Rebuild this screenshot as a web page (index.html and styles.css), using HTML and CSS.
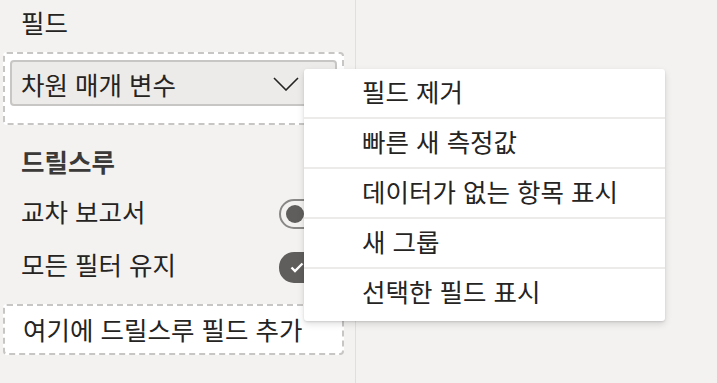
FILE: index.html
```html
<!DOCTYPE html>
<html lang="ko">
<head>
    <meta charset="UTF-8">
    <meta name="viewport" content="width=device-width, initial-scale=1.0">
    <title>필드 메뉴</title>
    <link rel="stylesheet" href="styles.css">
</head>
<body>

	<section class="pane">
		<!-- Fields well -->
		<div class="pane-title">필드</div>
		<div class="well">
			<div class="field-pill">
				<span>차원 매개 변수</span>
				<svg class="chevron" width="26" height="14" viewBox="0 0 26 14">
					<path d="M1 1 L13 13 L25 1" fill="none" stroke="#252423" stroke-width="1.6"/>
				</svg>
			</div>
		</div>

		<!-- Drill through -->
		<div class="pane-title bold">드릴스루</div>
		<div class="toggle-row">
			<span class="label">교차 보고서</span>
			<span class="toggle"><span class="knob"></span></span>
		</div>
		<div class="toggle-row second">
			<span class="label">모든 필터 유지</span>
			<span class="toggle on">
				<svg class="check" width="14" height="11" viewBox="0 0 14 11">
					<path d="M1.5 5.5 L5 9 L12.5 1.5" fill="none" stroke="#fff" stroke-width="2.4"/>
				</svg>
			</span>
		</div>
		<div class="well drop">여기에 드릴스루 필드 추가</div>
	</section>

	<!-- Context menu over the pane -->
	<ul class="menu">
		<li>필드 제거</li>
		<li>빠른 새 측정값</li>
		<li>데이터가 없는 항목 표시</li>
		<li>새 그룹</li>
		<li>선택한 필드 표시</li>
	</ul>

</body>
</html>
```

FILE: styles.css
```css
*{
    padding: 0;
    margin: 0;
    box-sizing: border-box;
}

body{
    background: #f3f2f1;
    color: #252423;
    font-family: "Noto Sans CJK KR", "Noto Sans", sans-serif;
    font-size: 25.5px;
    height: 100vh;
    overflow: hidden;
}

/* Left pane */
.pane{
    width: 356px;
    height: 100vh;
    border-right: 1px solid #e1dfdd;
    padding-top: 6px;
}

.pane-title{
    padding-left: 21px;
    line-height: 32px;
    height: 46px;
}
.pane-title.bold{
    font-weight: bold;
    color: #3b3a39;
    padding-top: 14px;
    line-height: 44px;
    height: 60px;
}

/* Dashed drop wells */
.well{
    margin-left: 3px;
    width: 341px;
    background: #fff;
    border: 2px dashed #c8c6c4;
    border-radius: 4px;
    padding: 6px 5px 17px 5px;
}

.field-pill{
    height: 46px;
    display: flex;
    align-items: center;
    justify-content: space-between;
    background: #edebe9;
    border: 2px solid #c8c6c4;
    border-radius: 4px;
    padding: 0 36px 0 9px;
}
.chevron{
    margin-top: 2px;
}

/* Toggle rows */
.toggle-row{
    display: flex;
    align-items: center;
    justify-content: space-between;
    height: 58px;
    padding: 0 16px 0 21px;
}
.toggle-row.second{
    height: 49px;
}
.label{
    padding-bottom: 8px;
}

.toggle{
    width: 60px;
    height: 30px;
    border: 2px solid #8a8886;
    border-radius: 15px;
    display: flex;
    align-items: center;
    padding-left: 5px;
}
.knob{
    width: 18px;
    height: 18px;
    border-radius: 50%;
    background: #605e5c;
}
.toggle.on{
    height: 31px;
    background: #605e5c;
    border-color: #605e5c;
    padding-left: 9px;
}

.well.drop{
    margin-top: 12px;
    height: 51px;
    padding: 0 0 3px 18px;
    display: flex;
    align-items: center;
}

/* Context menu */
.menu{
    position: absolute;
    left: 304px;
    top: 69px;
    width: 361px;
    list-style: none;
    background: #fff;
    border-radius: 3px;
    padding: 0 0 4px 0;
    box-shadow: rgba(0, 0, 0, 0.13) 0px 3px 7px, rgba(0, 0, 0, 0.11) 0px 1px 2px;
}
.menu li{
    height: 50px;
    line-height: 44px;
    padding-left: 58px;
    border-bottom: 2px solid #edebe9;
    cursor: default;
}
.menu li:last-child{
    border-bottom: none;
    height: 48px;
}
```
